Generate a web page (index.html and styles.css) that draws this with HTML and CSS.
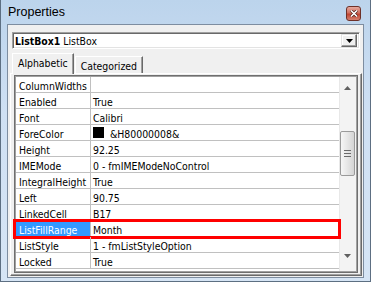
FILE: index.html
```html
<!DOCTYPE html>
<html lang="en">
<head>
    <meta charset="UTF-8">
    <title>Properties</title>
    <link rel="stylesheet" href="styles.css">
</head>
<body>
    <div class="window">
        <div class="titlebar">
            <span class="title">Properties</span>
            <span class="close">
                <svg width="8" height="7" viewBox="0 0 8 7"><path d="M1 0.5 L7 6.5 M7 0.5 L1 6.5" stroke="#4a1a14" stroke-width="3"/><path d="M1 0.5 L7 6.5 M7 0.5 L1 6.5" stroke="#fff" stroke-width="1.6"/></svg>
            </span>
        </div>
        <div class="client">
            <div class="combo">
                <span class="combo-text"><b>ListBox1</b> ListBox</span>
                <span class="combo-btn"><svg width="7" height="4" viewBox="0 0 7 4"><path d="M0 0 H7 L3.5 4 Z" fill="#000"/></svg></span>
            </div>
            <div class="tabs">
                <div class="tab active">Alphabetic</div>
                <div class="tab">Categorized</div>
            </div>
            <div class="page">
                <div class="grid">
                    <div class="rows">
                        <div class="row"><div class="name">ColumnWidths</div><div class="value"></div></div>
                        <div class="row"><div class="name">Enabled</div><div class="value">True</div></div>
                        <div class="row"><div class="name">Font</div><div class="value">Calibri</div></div>
                        <div class="row"><div class="name">ForeColor</div><div class="value"><span class="swatch"></span>&amp;H80000008&amp;</div></div>
                        <div class="row"><div class="name">Height</div><div class="value">92.25</div></div>
                        <div class="row"><div class="name">IMEMode</div><div class="value">0 - fmIMEModeNoControl</div></div>
                        <div class="row"><div class="name">IntegralHeight</div><div class="value">True</div></div>
                        <div class="row"><div class="name">Left</div><div class="value">90.75</div></div>
                        <div class="row"><div class="name">LinkedCell</div><div class="value">B17</div></div>
                        <div class="row selected"><div class="name">ListFillRange</div><div class="value">Month</div></div>
                        <div class="row"><div class="name">ListStyle</div><div class="value">1 - fmListStyleOption</div></div>
                        <div class="row"><div class="name">Locked</div><div class="value">True</div></div>
                    </div>
                    <div class="scrollbar">
                        <div class="sb-btn up"><svg width="7" height="4" viewBox="0 0 7 4"><path d="M0 4 H7 L3.5 0 Z" fill="#606060"/></svg></div>
                        <div class="sb-track">
                            <div class="thumb"><span class="grip"></span></div>
                        </div>
                        <div class="sb-btn down"><svg width="7" height="4" viewBox="0 0 7 4"><path d="M0 0 H7 L3.5 4 Z" fill="#606060"/></svg></div>
                    </div>
                </div>
            </div>
        </div>
    </div>
</body>
</html>
```

FILE: styles.css
```css
body { margin: 0; padding: 0; background: #dbe8f5; font-family: "DejaVu Sans Condensed", "DejaVu Sans", sans-serif; font-size: 10.4px; color: #000; }
.window { box-sizing: border-box; width: 371px; height: 282px; padding: 0 6px 3px 6px; border-left: 1px solid #5d6f82; border-right: 1px solid #5d6f82; border-bottom: 1px solid #5d6f82; background: linear-gradient(#bcd4ec, #cfe0f3 40%, #d6e5f5); display: flex; flex-direction: column; }
.titlebar { height: 24px; display: flex; justify-content: space-between; align-items: flex-start; }
.title { font-family: "Liberation Sans", Arial, sans-serif; font-size: 12.5px; margin: 5px 0 0 1px; }
.close { box-sizing: border-box; width: 15px; height: 15px; margin: 6px 3px 0 0; border: 1px solid #6e3128; border-radius: 3px; background: linear-gradient(#e6a99e, #d06f5f 45%, #c04430 55%, #d4806f); display: flex; align-items: center; justify-content: center; }
.client { flex: 1; border: 1px solid #7d8da0; background: #f0f0f0; display: flex; flex-direction: column; }

.combo { box-sizing: border-box; height: 17px; margin: 7px 3px 0 4px; background: #fff; border: 1px solid #a0a0a0; border-right-color: #fff; border-bottom-color: #fff; box-shadow: inset 1px 1px 0 #696969, inset -1px -1px 0 #e3e3e3; display: flex; align-items: center; justify-content: space-between; }
.combo-text { padding-left: 2px; padding-top: 1px; }
.combo-btn { box-sizing: border-box; width: 16px; height: 13px; margin-right: 2px; background: #f0f0f0; border: 1px solid #e3e3e3; border-right-color: #696969; border-bottom-color: #696969; box-shadow: inset -1px -1px 0 #a0a0a0, inset 1px 1px 0 #fff; display: flex; align-items: center; justify-content: center; }

.tabs { display: flex; align-items: flex-end; margin: 4px 0 0 4px; height: 20px; position: relative; z-index: 1; }
.tab { box-sizing: border-box; height: 17px; padding: 3px 5px 0 5px; border-top: 1px solid #fff; border-left: 1px solid #fff; border-right: 1px solid #696969; box-shadow: inset -1px 0 0 #a0a0a0; margin-left: 1px; }
.tab.active { height: 21px; margin-bottom: -1px; margin-left: 0; padding-top: 3px; background: #f0f0f0; }

.page { flex: 1; margin: 0 1px 1px 2px; border-top: 1px solid #fff; border-left: 1px solid #fff; border-right: 1px solid #696969; border-bottom: 1px solid #696969; box-shadow: inset -1px -1px 0 #a0a0a0; padding: 1px 3px 2px 3px; display: flex; }
.grid { flex: 1; display: flex; border: 1px solid #6f6f6f; box-shadow: inset 1px 1px 0 #a0a0a0, inset -1px -1px 0 #a0a0a0; padding: 1px; background: #fff; }
.rows { flex: 1; }
.row { display: flex; height: 15px; border-bottom: 1px solid #c0c0c0; position: relative; white-space: nowrap; }
.name, .value { box-sizing: border-box; padding-top: 3px; line-height: 12px; }
.name { width: 75px; padding-left: 3px; border-right: 1px solid #c0c0c0; }
.value { flex: 1; padding-left: 2px; display: flex; align-items: flex-start; }
.swatch { width: 11px; height: 11px; margin-top: -1px; background: #000; margin-right: 6px; }
.row.selected .name { background: #3399ff; color: #fff; }
.row.selected::after { content: ""; position: absolute; left: -3px; right: -2px; top: -2px; bottom: -3px; border: 3px solid #ff0000; }

.scrollbar { width: 17px; display: flex; flex-direction: column; background: #f3f3f3; box-shadow: inset 1px 0 0 #e8e8e8; }
.sb-btn { height: 17px; display: flex; justify-content: center; }
.sb-btn.up { align-items: flex-end; height: 13px; }
.sb-btn.down { align-items: flex-start; height: 17px; padding-top: 3px; }
.sb-track { flex: 1; padding-top: 41px; }
.thumb { box-sizing: border-box; width: 15px; height: 45px; margin-left: 1px; border: 1px solid #9a9a9a; border-radius: 2px; background: linear-gradient(90deg, #f6f6f6, #e6e6e6 50%, #d4d4d4); display: flex; align-items: center; justify-content: center; }
.grip { width: 7px; height: 5px; border-top: 1px solid #6a6a6a; border-bottom: 1px solid #6a6a6a; background: linear-gradient(transparent 2px, #6a6a6a 2px, #6a6a6a 3px, transparent 3px); }
```
